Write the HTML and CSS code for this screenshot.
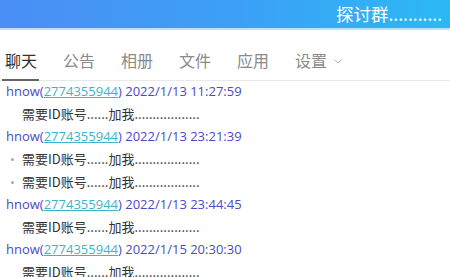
FILE: index.html
```html
<!DOCTYPE html>
<html lang="zh">
<head>
<meta charset="utf-8">
<link rel="stylesheet" href="styles.css">
</head>
<body>
<header class="topbar"><span class="title">探讨群...........</span></header>
<nav class="tabs">
  <span class="tab active">聊天</span>
  <span class="tab">公告</span>
  <span class="tab">相册</span>
  <span class="tab">文件</span>
  <span class="tab">应用</span>
  <span class="tab">设置<svg class="chev" width="8" height="5" viewBox="0 0 8 5"><path d="M0.5 0.5 L4 4 L7.5 0.5" fill="none" stroke="#b5b5b5" stroke-width="1"/></svg></span>
</nav>
<main class="chat">
  <div class="meta">hnow(<span class="qq">2774355944</span>) 2022/1/13 11:27:59</div>
  <div class="msg">需要ID账号......加我..................</div>
  <div class="meta">hnow(<span class="qq">2774355944</span>) 2022/1/13 23:21:39</div>
  <div class="msg bullet">需要ID账号......加我..................</div>
  <div class="msg bullet">需要ID账号......加我..................</div>
  <div class="meta">hnow(<span class="qq">2774355944</span>) 2022/1/13 23:44:45</div>
  <div class="msg">需要ID账号......加我..................</div>
  <div class="meta">hnow(<span class="qq">2774355944</span>) 2022/1/15 20:30:30</div>
  <div class="msg">需要ID账号......加我..................</div>
</main>
</body>
</html>
```
FILE: styles.css
```css
html, body { margin: 0; padding: 0; background: #fff; }
body {
  width: 450px;
  height: 277px;
  overflow: hidden;
  font-family: "Noto Sans CJK SC", "Noto Sans", sans-serif;
}
.topbar {
  height: 28px;
  background: linear-gradient(90deg, #4a8ef5 0%, #3d9ff5 50%, #2bb8f5 100%);
  border-bottom: 2px solid #bfe0fb;
  display: flex;
  justify-content: flex-end;
  align-items: center;
  padding-right: 8px;
}
.title {
  color: #fff;
  font-size: 17.5px;
  line-height: 28px;
}
.tabs {
  display: flex;
  gap: 26px;
  padding: 0 0 0 5px;
  margin-top: 17px;
  border-bottom: 1px solid #e8e8e8;
  height: 33px;
  align-items: flex-start;
}
.tab {
  position: relative;
  font-size: 16px;
  line-height: 26px;
  color: #8a8a8a;
  display: flex;
  align-items: center;
}
.tab.active { color: #333; }
.tab.active::after {
  content: "";
  position: absolute;
  left: -3px;
  right: -2px;
  top: 32px;
  height: 2px;
  background: #666;
}
.chev { margin-left: 7px; margin-top: 2px; }
.chat {
  font-size: 13px;
}
.meta {
  font-family: "Open Sans", "Noto Sans CJK SC", sans-serif;
  color: #4b4bc4;
  line-height: 20px;
  padding-left: 6px;
  height: 22px;
}
.qq {
  color: #3fb3cc;
  text-decoration: underline;
}
.msg {
  color: #333;
  line-height: 22px;
  padding-left: 22px;
  height: 23px;
  position: relative;
}
.msg.bullet::before {
  content: "";
  position: absolute;
  left: 11px;
  top: 10px;
  width: 3px;
  height: 3px;
  border-radius: 50%;
  background: #aaa;
}
```
